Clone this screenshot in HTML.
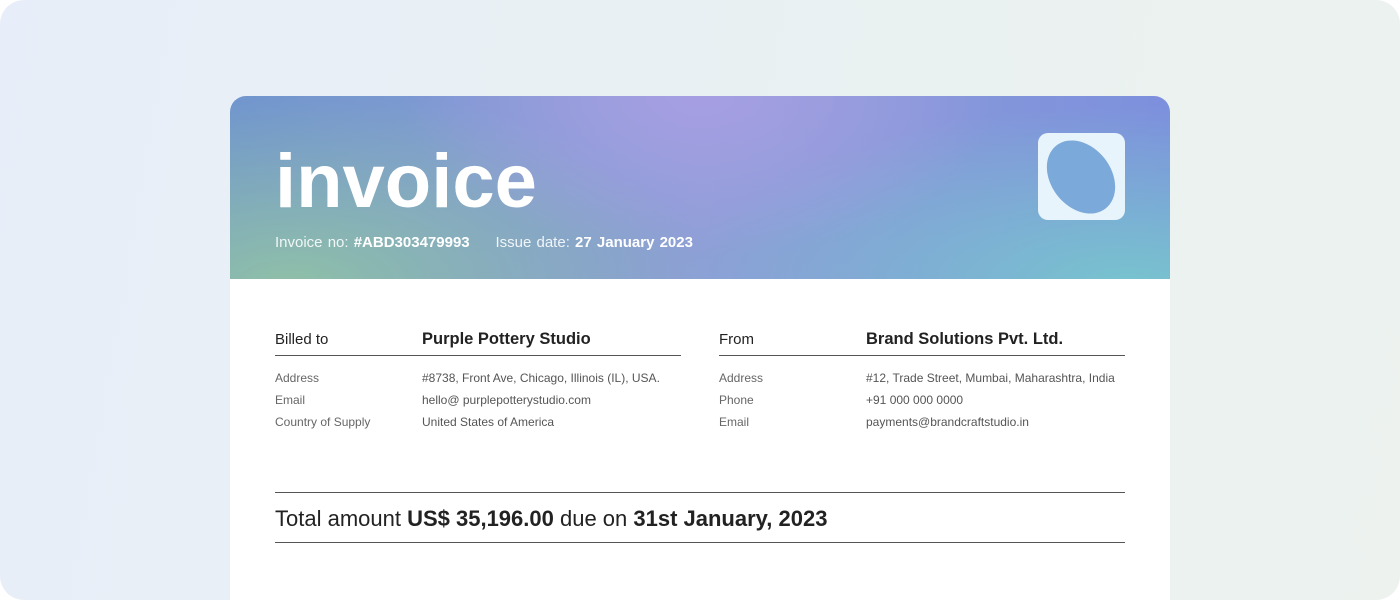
<!DOCTYPE html>
<html><head><style>
*{margin:0;padding:0;box-sizing:border-box}
body{width:1400px;height:600px;overflow:hidden;font-family:"Liberation Sans",sans-serif;background:#fff}
.bg{position:absolute;left:0;top:0;width:1400px;height:600px;border-radius:24px;background:linear-gradient(100deg,#e8eef9,#e9f1f1 60%,#edf2ef)}
.card{position:absolute;left:230px;top:96px;width:940px;height:520px;background:#fff;border-radius:16px 16px 0 0;overflow:hidden}
.hd{position:absolute;left:0;top:0;width:940px;height:183px;
background:
radial-gradient(ellipse 300px 160px at 470px 0px,rgba(168,158,228,.95),rgba(168,158,228,0) 100%),
radial-gradient(ellipse 420px 200px at 60px 190px,rgba(143,192,168,1),rgba(143,192,168,0) 100%),
radial-gradient(ellipse 450px 180px at 900px 190px,rgba(120,196,206,1),rgba(120,196,206,0) 100%),
linear-gradient(90deg,#6f93d0,#8d9fd6 50%,#7d90dd)}
.title{position:absolute;left:45px;top:42px;font-size:76px;font-weight:bold;color:#fff;letter-spacing:0px}
.meta{position:absolute;left:45px;top:138px;font-size:15px;color:rgba(255,255,255,.88);word-spacing:1px}
.meta b{font-weight:bold;color:#fff}
.logo{position:absolute;left:808px;top:37px;width:87px;height:87px;border-radius:10px;background:#e8f4fc;overflow:hidden}
.logo div{position:absolute;left:13px;top:4px;width:60px;height:80px;border-radius:50%;background:#7ba9d9;transform:rotate(-38deg)}
.col{position:absolute;top:232px;width:406px}
.h{display:flex;height:28px;border-bottom:1px solid #555;font-size:15px;color:#222}
.h span:first-child{width:147px;padding-top:3px}
.h span:last-child{font-weight:bold;font-size:16.5px;padding-top:2px}
.r{display:flex;font-size:12px;color:#555;height:22px;white-space:nowrap}
.r span:first-child{width:147px;color:#666}
.rows{padding-top:15px}
.tot{position:absolute;left:45px;top:396px;width:850px;height:51px;border-top:1px solid #555;border-bottom:1px solid #555;font-size:22px;color:#222;padding-top:13px}
</style></head><body>
<div class="bg"></div>
<div class="card">
<div class="hd">
<div class="title">invoice</div>
<div class="meta">Invoice no: <b>#ABD303479993</b>&nbsp;&nbsp;&nbsp;&nbsp; Issue date: <b>27 January 2023</b></div>
<div class="logo"><div></div></div>
</div>
<div class="col" style="left:45px">
<div class="h"><span>Billed to</span><span>Purple Pottery Studio</span></div>
<div class="rows">
<div class="r"><span>Address</span><span>#8738, Front Ave, Chicago, Illinois (IL), USA.</span></div>
<div class="r"><span>Email</span><span>hello@ purplepotterystudio.com</span></div>
<div class="r"><span>Country of Supply</span><span>United States of America</span></div>
</div></div>
<div class="col" style="left:489px">
<div class="h"><span>From</span><span>Brand Solutions Pvt. Ltd.</span></div>
<div class="rows">
<div class="r"><span>Address</span><span>#12, Trade Street, Mumbai, Maharashtra, India</span></div>
<div class="r"><span>Phone</span><span>+91 000 000 0000</span></div>
<div class="r"><span>Email</span><span>payments@brandcraftstudio.in</span></div>
</div></div>
<div class="tot">Total amount <b>US$ 35,196.00</b> due on <b>31st January, 2023</b></div>
</div>
</body></html>
